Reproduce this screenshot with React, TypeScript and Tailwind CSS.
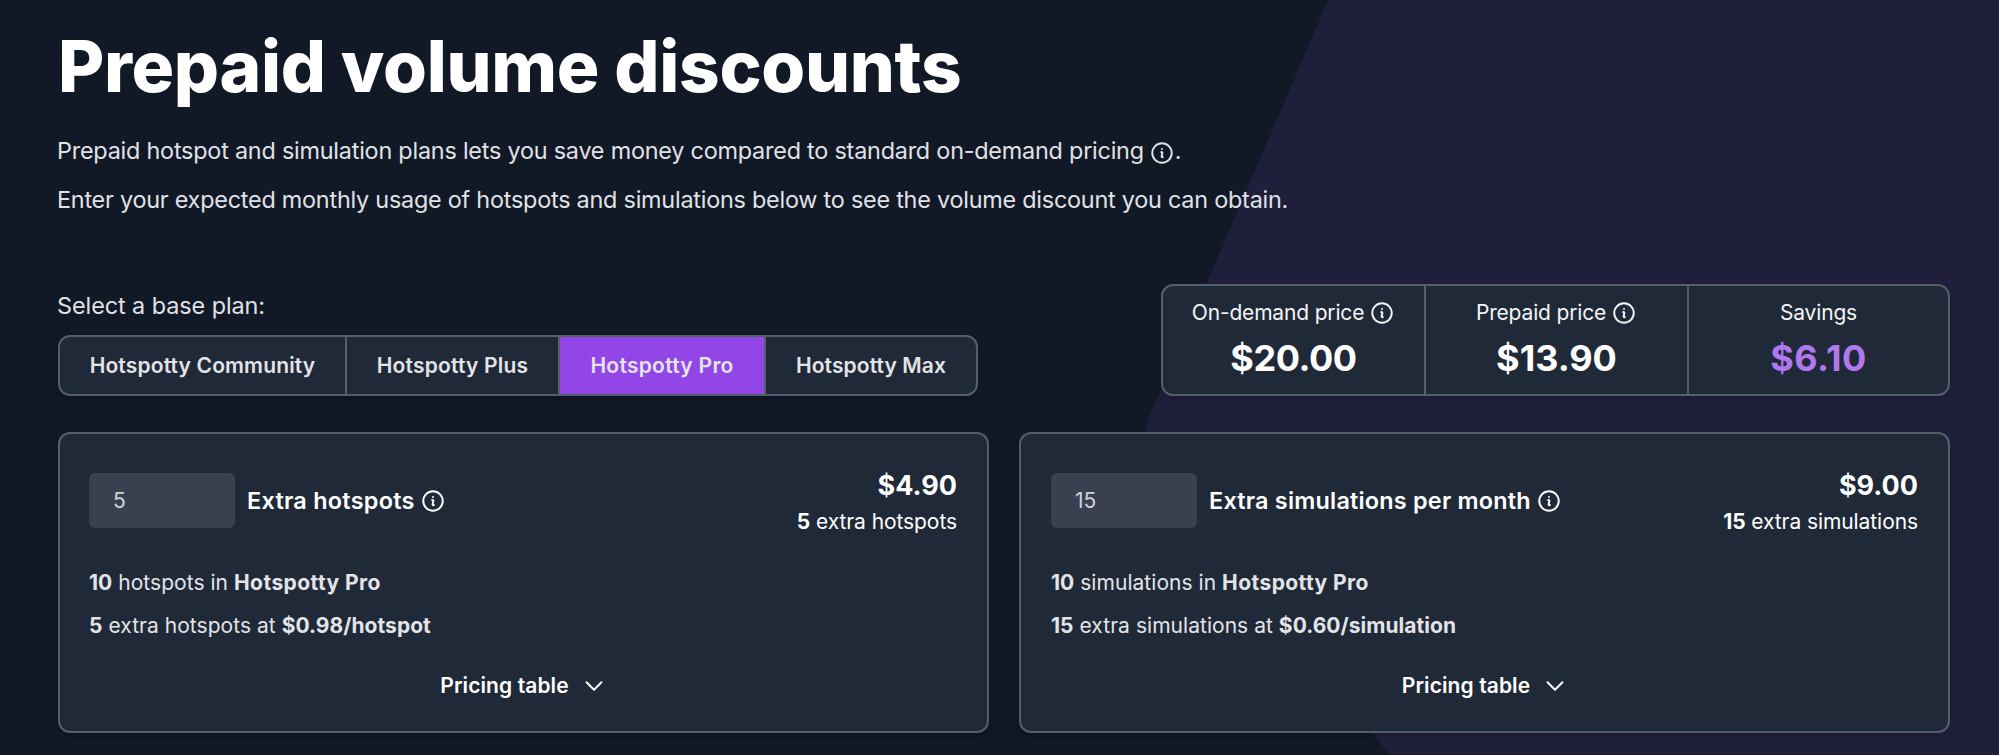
function InfoIcon({ className = '' }: { className?: string }) {
  return (
    <svg viewBox="0 0 24 24" fill="none" stroke="currentColor" strokeWidth={1.8} strokeLinecap="round" strokeLinejoin="round" className={`size-[26px] shrink-0 ${className}`}>
      <path d="m11.25 11.25.041-.02a.75.75 0 0 1 1.063.852l-.708 2.836a.75.75 0 0 0 1.063.853l.041-.021M21 12a9 9 0 1 1-18 0 9 9 0 0 1 18 0Zm-9-3.75h.008v.008H12V8.25Z" />
    </svg>
  );
}

function ChevronDown() {
  return (
    <svg viewBox="0 0 24 24" fill="none" stroke="currentColor" strokeWidth={1.9} strokeLinecap="round" strokeLinejoin="round" className="size-6 shrink-0">
      <path d="m19.5 8.25-7.5 7.5-7.5-7.5" />
    </svg>
  );
}

const plans = [
  { name: 'Hotspotty Community', size: 'w-[285px] tracking-[0.15px]' },
  { name: 'Hotspotty Plus', size: 'w-[213px] tracking-[0.2px]' },
  { name: 'Hotspotty Pro', size: 'w-[206px] tracking-[0.28px]' },
  { name: 'Hotspotty Max', size: 'w-[212px] tracking-[0.1px]' },
];

function PlanSelector() {
  return (
    <div className="flex h-[61px] w-[920px] overflow-hidden rounded-[12px] border-2 border-[#555e6b] bg-[#202937] shadow-md">
      {plans.map(({ name, size }, i) => (
        <button
          key={name}
          className={`flex shrink-0 items-center justify-center pt-px text-[21px] font-semibold text-[#e3e4e8] ${size} ${i > 0 ? 'border-l-2 border-[#555e6b]' : ''} ${name === 'Hotspotty Pro' ? 'bg-[#9346e8]' : ''}`}
        >
          {name}
        </button>
      ))}
    </div>
  );
}

function Price({ label, value, info, valueStyle }: { label: string; value: string; info?: boolean; valueStyle: string }) {
  return (
    <div className="flex flex-col items-center pt-[13px]">
      <div className="flex h-7 items-center gap-[5px] text-[21px] tracking-[-0.17px] text-[#f3f4f6]">
        {label}
        {info && <InfoIcon />}
      </div>
      <div className={`mt-[9px] h-11 text-[36px] leading-[44px] font-bold ${valueStyle}`}>{value}</div>
    </div>
  );
}

function UsageCard({ count, title, titleTracking, total, unit, rate, padding }: { count: number; title: string; titleTracking: string; total: string; unit: string; rate: string; padding: string }) {
  return (
    <section className={`flex h-[301px] flex-col rounded-[12px] border-2 border-[#555e6b] bg-[#202937] shadow-md ${padding}`}>
      <div className="mt-[31px] flex justify-between">
        <div className="mt-2 flex h-[55px] items-center">
          <div className="flex h-[55px] w-[146px] items-center rounded-[6px] bg-[#394150] pl-6 text-[21px] text-[#cfd2d8]">{count}</div>
          <h2 className={`ml-3 text-[23.4px] font-semibold text-white ${titleTracking}`}>{title}</h2>
          <InfoIcon className="ml-[5px] text-white" />
        </div>
        <div className="text-right text-white">
          <div className="h-[41px] text-[27px] leading-[41px] font-bold">{total}</div>
          <div className="h-8 text-[21px] leading-8 tracking-[-0.08px]"><b>{count}</b> extra {unit}s</div>
        </div>
      </div>
      <div className="mt-[24px] text-[21px] leading-[42.5px] tracking-[0.04px] text-[#e3e4e8]">
        <p><b>10</b> {unit}s in <b className="tracking-[0.43px]">Hotspotty Pro</b></p>
        <p><b>{count}</b> extra {unit}s at <b>{rate}/{unit}</b></p>
      </div>
      <button className="mt-[23px] flex h-8 items-center justify-center gap-[13px] text-[21px] font-semibold tracking-[0.1px] text-white">
        Pricing table
        <ChevronDown />
      </button>
    </section>
  );
}

export default function App() {
  return (
    <div className="h-[756px] bg-white font-['Inter','Liberation_Sans',sans-serif]">
      <main className="relative isolate h-[755px] overflow-hidden bg-[#111826] pr-[49px] pl-[58px]">
        <svg viewBox="0 0 1999 755" className="absolute inset-0 -z-10 h-full w-full" fill="#1f1f3b">
          <path d="M1328 0 L1155 404 Q1138 432 1157 450 L1373 733 L1389.500 755 H1999 V0 Z" />
        </svg>
        <h1 className="pt-[30px] text-[71px] leading-[72px] font-extrabold tracking-[-0.32px] text-white">Prepaid volume discounts</h1>
        <div className="mt-[25px] -ml-px text-[23.4px] leading-[48.500px] text-[#e0e2e6]">
          <p className="flex items-center tracking-[-0.22px]">
            Prepaid hotspot and simulation plans lets you save money compared to standard on-demand pricing
            <InfoIcon className="mt-1 ml-[5px]" />.
          </p>
          <p className="tracking-[-0.23px]">Enter your expected monthly usage of hotspots and simulations below to see the volume discount you can obtain.</p>
        </div>
        <div className="mt-[60px] flex items-end justify-between">
          <div>
            <div className="mb-[11px] -ml-px text-[23.4px] leading-9 tracking-[-0.06px] text-[#e0e2e6]">Select a base plan:</div>
            <PlanSelector />
          </div>
          <div className="grid h-[112px] w-[789px] grid-cols-[263px_263px_1fr] divide-x-2 divide-[#555e6b] rounded-[12px] border-2 border-[#555e6b] bg-[#202937] shadow-md">
            <Price label="On-demand price" value="$20.00" info valueStyle="text-white tracking-[-0.45px]" />
            <Price label="Prepaid price" value="$13.90" info valueStyle="text-white" />
            <Price label="Savings" value="$6.10" valueStyle="text-[#b078ef] tracking-[0.4px]" />
          </div>
        </div>
        <div className="mt-9 grid grid-cols-2 gap-[30px]">
          <UsageCard count={5} title="Extra hotspots" titleTracking="tracking-[0.28px]" total="$4.90" unit="hotspot" rate="$0.98" padding="pl-[29px] pr-[30px]" />
          <UsageCard count={15} title="Extra simulations per month" titleTracking="tracking-[0.22px]" total="$9.00" unit="simulation" rate="$0.60" padding="px-[30px]" />
        </div>
      </main>
    </div>
  );
}
